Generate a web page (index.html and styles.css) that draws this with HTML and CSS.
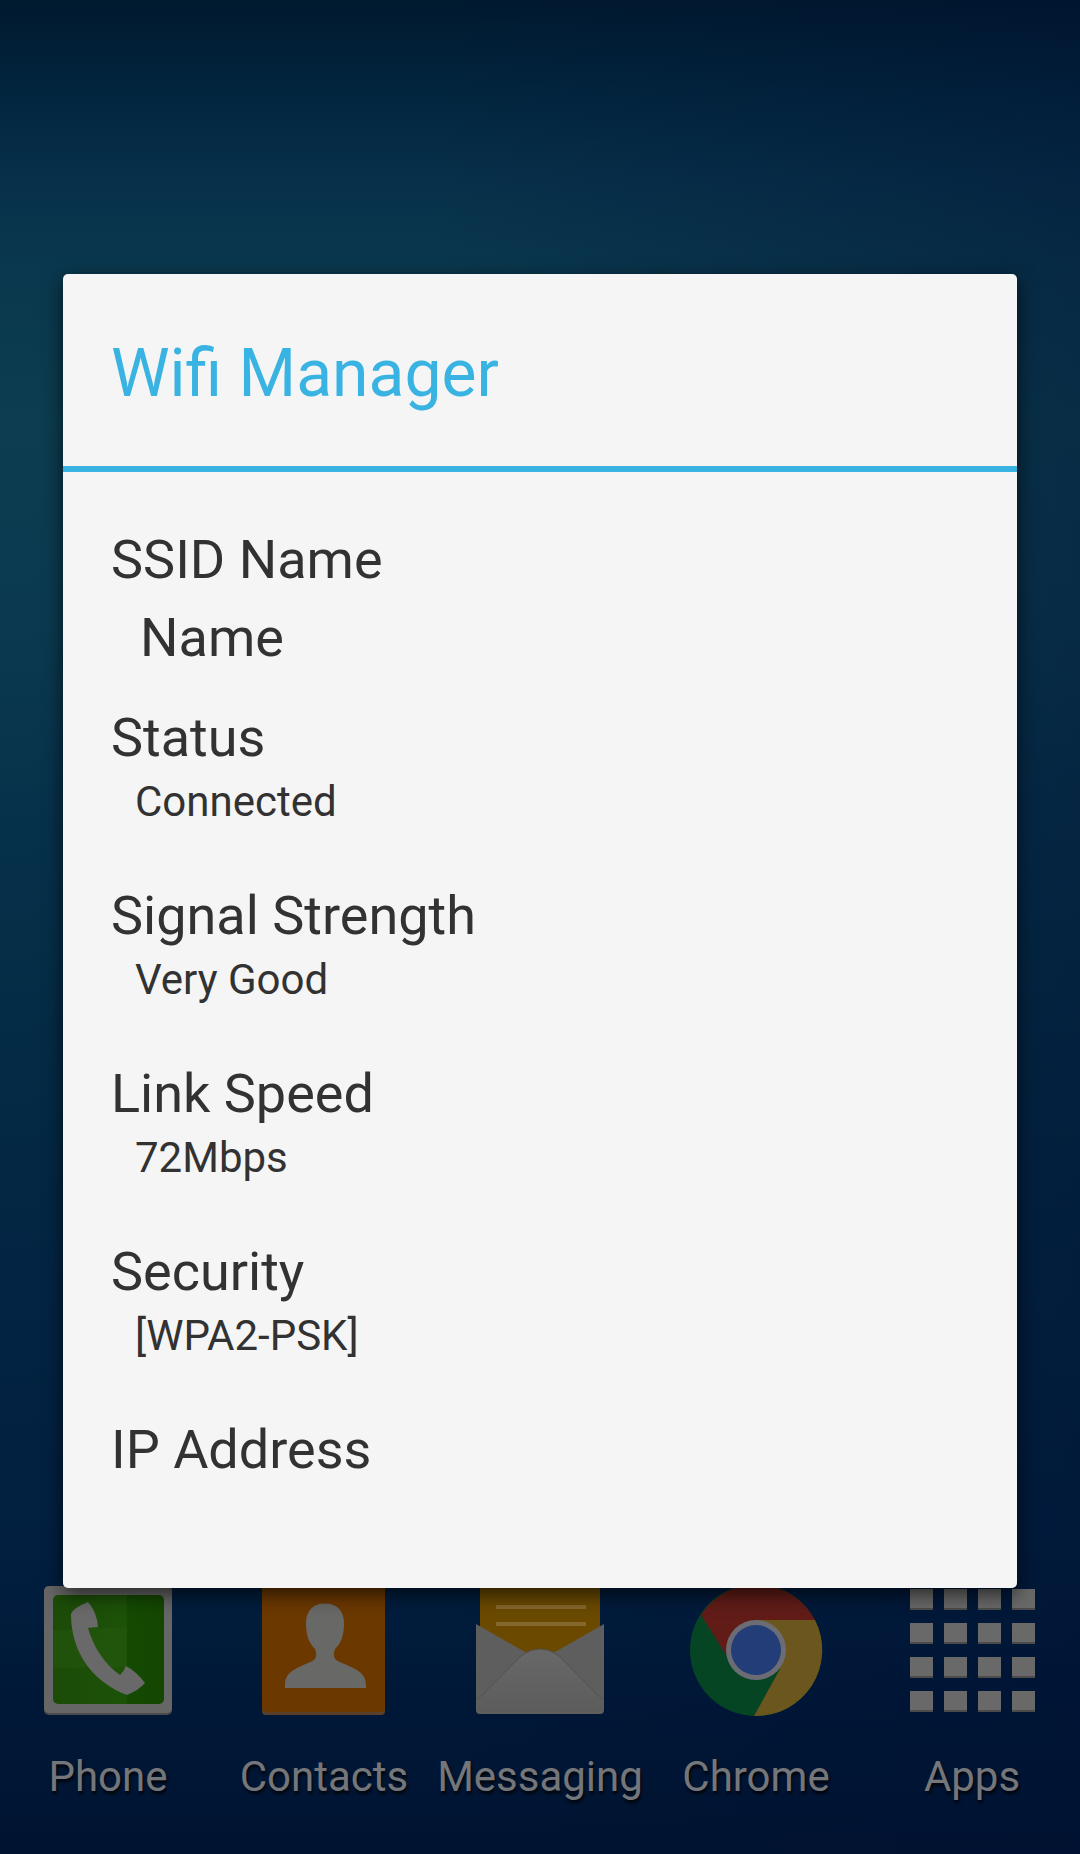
FILE: index.html
```
<!DOCTYPE html>
<html lang="en">
<head>
    <meta charset="UTF-8">
    <meta name="viewport" content="width=device-width, initial-scale=1.0">
    <title>Wifi Manager</title>
    <link rel="stylesheet" href="styles.css">
</head>
<body>
    <main class="dialog">
        <h1 class="title">Wifi Manager</h1>
        <div class="item">
            <div class="label">SSID Name</div>
            <div class="name">Name</div>
        </div>
        <div class="item">
            <div class="label">Status</div>
            <div class="value">Connected</div>
        </div>
        <div class="item">
            <div class="label">Signal Strength</div>
            <div class="value">Very Good</div>
        </div>
        <div class="item">
            <div class="label">Link Speed</div>
            <div class="value">72Mbps</div>
        </div>
        <div class="item">
            <div class="label">Security</div>
            <div class="value">[WPA2-PSK]</div>
        </div>
        <div class="item">
            <div class="label">IP Address</div>
        </div>
    </main>

    <nav class="dock">
        <div class="app">
            <svg class="icon" viewBox="0 0 144 144">
                <defs>
                    <linearGradient id="green" x1="0" y1="0" x2="1" y2="0">
                        <stop offset="0" stop-color="#1c4b08"/>
                        <stop offset="0.66" stop-color="#1c5208"/>
                        <stop offset="0.67" stop-color="#144a02"/>
                        <stop offset="1" stop-color="#144602"/>
                    </linearGradient>
                </defs>
                <rect x="8" y="8" width="128" height="129" rx="5" fill="#4b4b4c"/>
                <rect x="8" y="8" width="128" height="127" rx="5" fill="#666667"/>
                <rect x="17" y="17" width="111" height="109" rx="5" fill="url(#green)"/>
                <path d="M17 52L91 49V89L17 90Z" fill="#2b6412" opacity="0.25"/>
                <path d="M52 24Q37 30 35 36C35 75 57 104 91 117Q103 112 109 105Q101 94 90 88Q88 93 84 97C69 87 57 68 52 50L62 49Q61 34 52 24Z" fill="#696969"/>
            </svg>
            <span>Phone</span>
        </div>
        <div class="app">
            <svg class="icon" viewBox="0 0 144 144">
                <rect x="10" y="8" width="123" height="129" rx="4" fill="#59402d"/>
                <path d="M10 8H133V130Q133 133 129 134H13Q10 133 10 130Z" fill="#6b3800"/>
                <path d="M73 25.500C61 25.500 54 33 54 45C54 58 57 65 63 71Q66 78 62 82C50 89 33 91 33 107V110H114V107C114 91 96 89 84 82Q80 78 83 71C89 65 92 58 92 45C92 33 85 25.500 73 25.500Z" fill="#686867"/>
            </svg>
            <span>Contacts</span>
        </div>
        <div class="app">
            <svg class="icon" viewBox="0 0 144 144">
                <defs>
                    <linearGradient id="flap" x1="0" y1="0" x2="0" y2="1">
                        <stop offset="0" stop-color="#686868"/>
                        <stop offset="1" stop-color="#5c5c5c"/>
                    </linearGradient>
                </defs>
                <path d="M12 0H132V100H12Z" fill="#6b4a00"/>
                <path d="M28 29H118M28 46H118" stroke="#84672c" stroke-width="4"/>
                <path d="M8 46L57 74H87L136 46V132Q136 136 132 136H12Q8 136 8 132Z" fill="#5e5e5e"/>
                <path d="M9 122L54 77Q72 65 90 77L135 122V130Q135 134 130 134H14Q9 134 9 130Z" fill="url(#flap)"/>
                <path d="M9 122L54 77Q72 65 90 77L135 122" fill="none" stroke="#505050" stroke-width="1"/>
            </svg>
            <span>Messaging</span>
        </div>
        <div class="app">
            <svg class="icon" viewBox="0 0 144 144">
                <circle cx="72" cy="72" r="66" fill="#054524"/>
                <path d="M72 72L17 37A66 66 0 0 1 131 42V72Z" fill="#611c18"/>
                <path d="M42 77L17 37L72 42Z" fill="#611c18"/>
                <path d="M72 42H131A66 66 0 0 1 70 138L96 91Z" fill="#6b561d"/>
                <circle cx="72" cy="72" r="30" fill="#6c6c74"/>
                <circle cx="72" cy="72" r="25" fill="#223d78"/>
            </svg>
            <span>Chrome</span>
        </div>
        <div class="app">
            <svg class="icon" viewBox="0 0 144 144">
                <defs>
                    <g id="row">
                        <path d="M10 0h23v21h-23zM44 0h23v21h-23zM78 0h23v21h-23zM112 0h23v21h-23z" fill="#4b4b4c"/>
                        <path d="M10 0h23v19h-23zM44 0h23v19h-23zM78 0h23v19h-23zM112 0h23v19h-23z" fill="#696969"/>
                    </g>
                </defs>
                <use href="#row" y="11"/>
                <use href="#row" y="45"/>
                <use href="#row" y="79"/>
                <use href="#row" y="113"/>
            </svg>
            <span>Apps</span>
        </div>
    </nav>
</body>
</html>
```
FILE: styles.css
```
* {
    box-sizing: border-box;
}
body {
    margin: 0;
    height: 1854px;
    overflow: hidden;
    display: flex;
    flex-direction: column;
    font-family: Roboto, sans-serif;
    background:
        linear-gradient(to right, rgba(0, 14, 48, 0) 40%, rgba(0, 14, 48, 0.35) 100%),
        linear-gradient(to bottom, #00192f 0, #02253e 90px, #07304a 180px, #0a384e 270px, #0c3d50 420px, #0b3a50 620px, #07324b 800px, #042b45 1050px, #032443 1300px, #021f3f 1550px, #001838 1700px, #001431 1854px);
}
.dialog {
    position: relative;
    z-index: 1;
    flex: none;
    height: 1314px;
    margin: 274px 63px 0;
    background: #f5f5f5;
    border-radius: 5px;
    box-shadow: 0 6px 20px rgba(0, 0, 0, 0.65);
}
.title {
    height: 198px;
    margin: 0 0 56px;
    padding: 7px 48px 0;
    border-bottom: 6px solid #39b3e2;
    color: #39b3e2;
    font-size: 66px;
    font-weight: 400;
    line-height: 185px;
}
.item {
    height: 178px;
    padding-left: 48px;
    color: #323232;
}
.label {
    font-size: 54px;
    line-height: 63px;
}
.name {
    margin-top: 15px;
    padding-left: 29px;
    font-size: 54px;
    line-height: 63px;
}
.value {
    margin-top: 8px;
    padding-left: 24px;
    font-size: 42px;
    line-height: 49px;
}
.dock {
    display: flex;
    margin-top: -10px;
}
.app {
    flex: 1;
    display: flex;
    flex-direction: column;
    align-items: center;
    gap: 30px;
    color: #747679;
    font-size: 42px;
    line-height: 49px;
    text-shadow: 1px 3px 3px rgba(0, 0, 0, 0.8);
}
.icon {
    width: 144px;
    height: 144px;
}
```
